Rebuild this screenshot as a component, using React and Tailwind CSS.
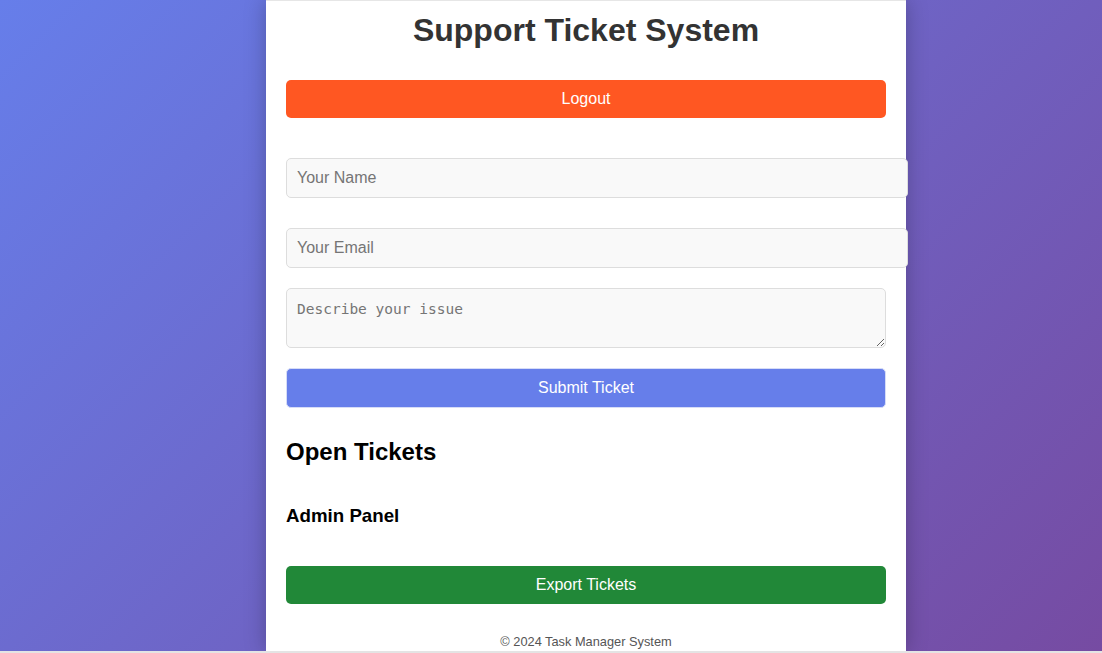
export default function App() {
  return (
    <div className="flex h-[653px] w-[1102px] flex-col overflow-hidden font-['Liberation_Sans',Arial,sans-serif]">
      <div className="flex h-[651px] bg-[linear-gradient(135deg,#667eea_0%,#764ba2_100%)]">
        <div className="ml-[266px] flex h-[651px] w-[640px] flex-col border-t border-[#e6e6e6] bg-white px-5 shadow-[0_0_20px_rgba(0,0,0,0.25)]">
          <h1 className="mt-[11px] text-center text-[32px] font-bold leading-[37px] text-[#333]">
            Support Ticket System
          </h1>
          <button className="mt-[31px] h-[38px] w-[600px] shrink-0 rounded-[5px] bg-[#ff5722] text-[16px] leading-[18px] text-white">
            Logout
          </button>
          <input
            className="mt-[40px] box-content h-[18px] w-[600px] shrink-0 rounded-[5px] border border-[#dddddd] bg-[#f9f9f9] px-[10px] py-[10px] text-[16px] leading-[18px] text-[#333] placeholder:text-[#757575]"
            placeholder="Your Name"
          />
          <input
            className="mt-[30px] box-content h-[18px] w-[600px] shrink-0 rounded-[5px] border border-[#dddddd] bg-[#f9f9f9] px-[10px] py-[10px] text-[16px] leading-[18px] text-[#333] placeholder:text-[#757575]"
            placeholder="Your Email"
          />
          <textarea
            className="mt-[20px] h-[60px] w-[600px] shrink-0 resize-y rounded-[5px] border border-[#dddddd] bg-[#f9f9f9] px-[10px] pt-[12px] pb-[8px] font-['DejaVu_Sans_Mono',monospace] text-[14.5px] leading-[17px] text-[#333] placeholder:text-[#757575]"
            placeholder="Describe your issue"
          />
          <button className="mt-[20px] h-[40px] w-[600px] shrink-0 rounded-[5px] border border-[#d6dcf7] bg-[#667eea] text-[16px] leading-[18px] text-white">
            Submit Ticket
          </button>
          <h2 className="mt-[30px] text-[24px] font-bold leading-[28px] text-black">Open Tickets</h2>
          <h3 className="mt-[39px] text-[18.72px] font-bold leading-[22px] text-black">Admin Panel</h3>
          <button className="mt-[39px] h-[38px] w-[600px] shrink-0 rounded-[5px] bg-[#218838] text-[16px] leading-[18px] text-white">
            Export Tickets
          </button>
          <p className="mt-[30px] shrink-0 text-center text-[12.8px] leading-[15px] text-[#555]">
            © 2024 Task Manager System
          </p>
        </div>
      </div>
      <div className="h-[2px] bg-[#e4e4e4]" />
    </div>
  );
}
